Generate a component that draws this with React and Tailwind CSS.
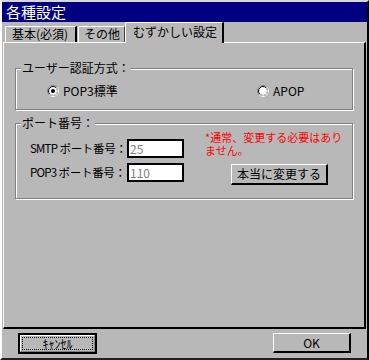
import React from 'react';

const FONT = "font-['Noto_Sans_CJK_JP','Noto_Sans_CJK_SC',sans-serif]";

function Radio({ checked }) {
  return (
    <svg width="12" height="12" viewBox="0 0 12 12" className="shrink-0">
      <circle cx="6" cy="6" r="5.5" fill="#fff" stroke="#808080" />
      <path d="M9.89 2.11 A5.5 5.5 0 0 1 2.11 9.89" fill="none" stroke="#fff" />
      <circle cx="6" cy="6" r="4.5" fill="#fff" stroke="#000" />
      <path d="M9.18 2.82 A4.5 4.5 0 0 1 2.82 9.18" fill="none" stroke="#d4d4d4" />
      {checked && <circle cx="6" cy="6" r="2" fill="#000" />}
    </svg>
  );
}

function Group({ label, className, children }) {
  return (
    <div className={`relative border border-[#808080] shadow-[inset_1px_1px_0_#fff,1px_1px_0_#fff] ${className}`}>
      <span className="absolute left-[5px] top-[-9px] bg-[#b8b8b8] px-[1px] text-[12px] leading-[16px] whitespace-nowrap">{label}</span>
      {children}
    </div>
  );
}

export default function App() {
  return (
    <div className={`w-[369px] h-[360px] bg-[#b8b8b8] flex flex-col border-t-2 border-l-2 border-t-[#d8d8d8] border-l-white border-r-2 border-b-2 border-r-black border-b-[#202020] text-black ${FONT}`}>
      {/* title bar */}
      <div className="h-[20px] bg-[#000080] text-white text-[15px] leading-[20px] pl-[4px]">各種設定</div>

      {/* tabs */}
      <div className="h-[20px] flex items-end pl-[3px] whitespace-nowrap">
        <div className="h-[16px] w-[72px] border-l border-t border-white border-r-2 border-r-black rounded-tl-[2px] text-[12px] leading-[14px] pl-[6px]">
          基本(必須)
        </div>
        <div className="h-[16px] w-[47px] ml-[1px] border-l border-t border-white border-r border-r-[#404040] rounded-tl-[2px] text-[12px] leading-[14px] pl-[5px]">
          その他
        </div>
        <div className="relative z-10 -mb-px h-[21px] w-[99px] bg-[#b8b8b8] border-l border-t border-white border-r-2 border-r-black rounded-tl-[2px] text-[12px] leading-[16px] pl-[7px] pt-[1px]">
          むずかしい設定
        </div>
      </div>

      {/* panel */}
      <div className="ml-[1px] w-[363px] h-[287px] border-l border-t border-white border-r-2 border-b-2 border-r-black border-b-black flex flex-col">
        <Group label="ユーザー認証方式：" className="ml-[11px] mt-[25px] w-[338px] h-[42px]">
          <div className="flex items-center h-full pt-[4px] text-[12px]">
            <div className="flex items-center gap-[4px] ml-[31px] w-[210px]">
              <Radio checked />
              <span>POP3標準</span>
            </div>
            <div className="flex items-center gap-[4px]">
              <Radio />
              <span>APOP</span>
            </div>
          </div>
        </Group>

        <Group label="ポート番号：" className="ml-[11px] mt-[13px] w-[338px] h-[76px]">
          <div className="flex text-[12px]">
            <div className="flex flex-col gap-[5px] pt-[15px] pl-[14px]">
              <div className="flex items-center">
                <span className="w-[97px] leading-[19px] whitespace-nowrap text-[11.5px] tracking-[-0.3px]"><span className="tracking-[-0.8px]">SMTP</span> ポート番号：</span>
                <div className="w-[57px] h-[19px] bg-white border-2 border-black text-[#808080] text-[12px] leading-[15px] pl-[1px]">25</div>
              </div>
              <div className="flex items-center">
                <span className="w-[97px] leading-[19px] whitespace-nowrap text-[11.5px] tracking-[-0.3px]"><span className="tracking-[-0.8px]">POP3</span> ポート番号：</span>
                <div className="w-[57px] h-[19px] bg-white border-2 border-black text-[#808080] text-[12px] leading-[15px] pl-[1px]">110</div>
              </div>
            </div>
            <div className="flex flex-col ml-[21px] pt-[7px]">
              <div className="text-[#ff0000] text-[11px] leading-[13px] w-[140px] whitespace-nowrap">
                <div>*通常、変更する必要はあり</div>
                <div>ません。</div>
              </div>
              <button className="mt-[7px] ml-[26px] w-[97px] h-[21px] border-l border-t border-white border-r-2 border-b-2 border-r-black border-b-black bg-[#b8b8b8] text-[12px] leading-[16px] whitespace-nowrap">
                本当に変更する
              </button>
            </div>
          </div>
        </Group>
      </div>

      {/* footer */}
      <div className="flex justify-between pl-[16px] pr-[16px] pt-[4px]">
        <button className="w-[79px] h-[21px] border-2 border-black bg-[#b8b8b8] p-0">
          <div className="h-full border-l border-t border-white border-r border-b border-r-[#808080] border-b-[#808080] p-[1px]">
            <div className="h-full border border-dotted border-black flex items-center justify-center text-[12px] leading-[12px]">ｷｬﾝｾﾙ</div>
          </div>
        </button>
        <button className="w-[78px] h-[20px] border-l border-t border-white border-r-2 border-b-2 border-r-black border-b-black bg-[#b8b8b8] text-[12px] leading-[16px]">
          OK
        </button>
      </div>
    </div>
  );
}
